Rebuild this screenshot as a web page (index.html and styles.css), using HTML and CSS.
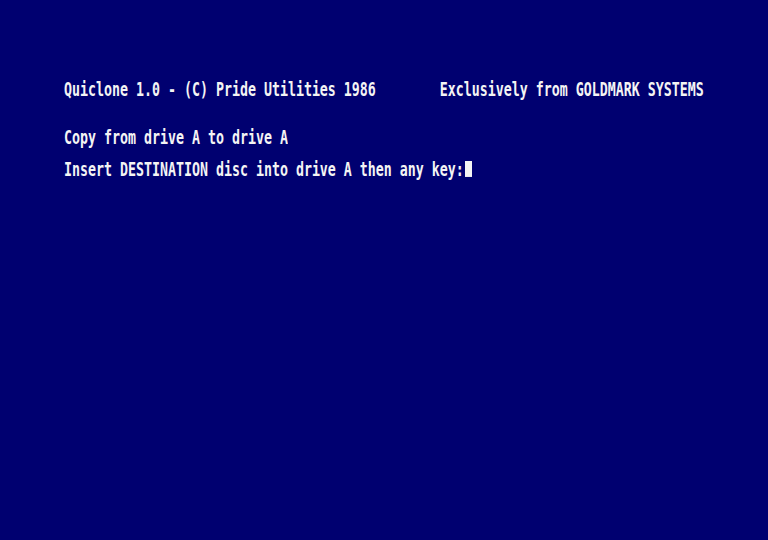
FILE: index.html
```html
<!DOCTYPE html>
<html lang="en">
<head>
  <meta charset="UTF-8" />
  <title>Quiclone 1.0</title>
  <link rel="stylesheet" href="styles.css">
</head>
<body>
  <div class="screen">
    <div class="row"><span class="txt">Quiclone 1.0 - (C) Pride Utilities 1986        Exclusively from GOLDMARK SYSTEMS</span></div>
    <div class="row"></div>
    <div class="row"></div>
    <div class="row"><span class="txt">Copy from drive A to drive A</span></div>
    <div class="row"></div>
    <div class="row"><span class="txt">Insert DESTINATION disc into drive A then any key:<span class="cursor"></span></span></div>
  </div>
</body>
</html>
```

FILE: styles.css
```css
* {
  margin: 0;
  padding: 0;
  box-sizing: border-box;
}

html, body {
  height: 100%;
  background: #000070;
}

body {
  overflow: hidden;
}

.screen {
  padding: 81px 0 0 64px;
  color: #f4f4f4;
  font-family: "DejaVu Sans Mono", "Liberation Mono", monospace;
  font-weight: bold;
}

.row {
  height: 16px;
  white-space: pre;
}

/* CPC font is tall and narrow: 8px wide cells, doubled scanlines */
.txt {
  display: inline-block;
  font-size: 13.29px;
  line-height: 11px;
  height: 11px;
  transform: scaleY(1.45);
  transform-origin: top left;
  vertical-align: top;
}

.cursor {
  display: inline-block;
  width: 7px;
  height: 11px;
  margin-left: 1px;
  background: #f4f4f4;
  vertical-align: top;
}
```
